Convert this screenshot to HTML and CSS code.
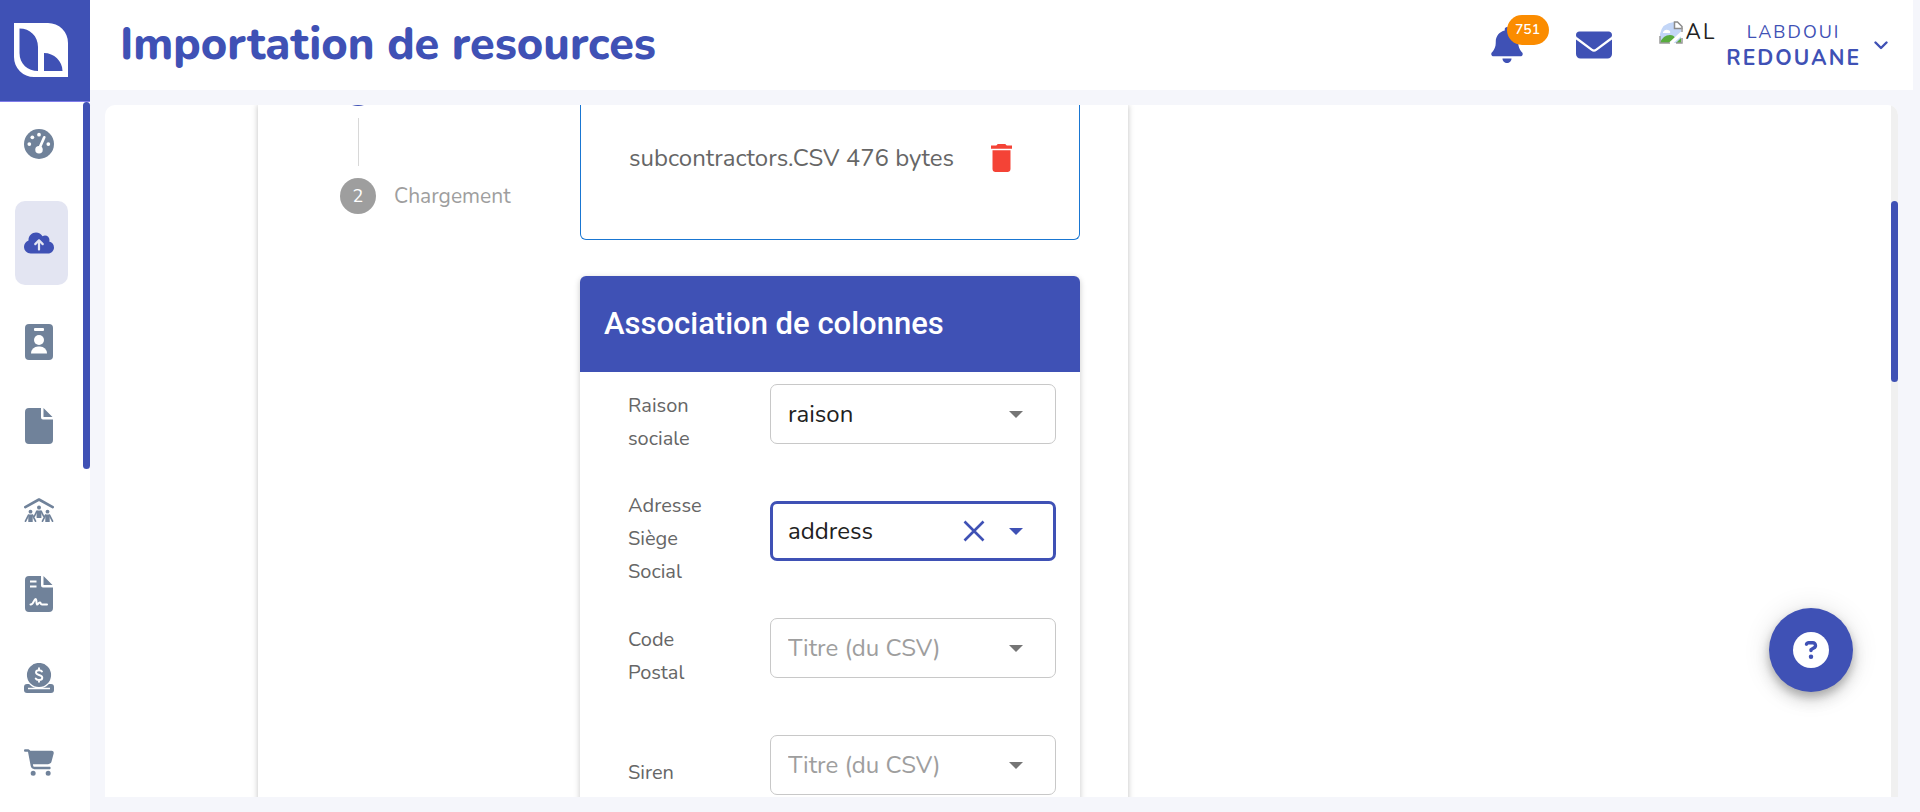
FILE: index.html
```html
<!DOCTYPE html>
<html lang="fr">
<head>
<meta charset="utf-8">
<meta name="viewport" content="width=device-width, initial-scale=1">
<title>Importation de resources</title>
<link rel="stylesheet" href="styles.css">
</head>
<body>
<div class="app">
  <aside class="sidebar">
    <a class="logo" href="#" aria-label="Accueil">
      <svg width="54" height="54" viewBox="0 0 54 54"><path fill="#fff" fill-rule="evenodd" d="M0 0H34A20 20 0 0 1 54 20V54H20A20 20 0 0 1 0 34ZM5.500 5.500V30C5.500 41 14 48 24 48V24C24 13 16 5.500 5.500 5.500ZM30 30V48H48.500C48.500 38 40 30 30 30Z"/></svg>
    </a>
    <div class="side-body">
      <nav class="nav" aria-label="Navigation principale">
        <a class="nav-item" href="#" aria-label="Tableau de bord">
          <svg width="30" height="30" viewBox="0 0 512 512"><circle cx="256" cy="256" r="256" fill="currentColor"/><g fill="#fff"><circle cx="91" cy="256" r="32"/><circle cx="142" cy="142" r="32"/><circle cx="256" cy="96" r="32"/><circle cx="415" cy="256" r="32"/><circle cx="256" cy="352" r="64"/></g><path d="M262 330 346 142" stroke="#fff" stroke-width="46" stroke-linecap="round"/></svg>
        </a>
        <a class="nav-item active" href="#" aria-label="Importation" aria-current="page">
          <svg width="30" height="24" viewBox="0 0 640 512"><path fill="currentColor" d="M144 480C64.500 480 0 415.500 0 336c0-62.800 40.200-116.200 96.200-135.900c-.1-2.700-.2-5.400-.2-8.100c0-88.400 71.600-160 160-160c59.300 0 111 32.200 138.700 80.200C409.900 102 428.300 96 448 96c53 0 96 43 96 96c0 12.200-2.300 23.800-6.400 34.600C596 238.400 640 290.100 640 352c0 70.700-57.300 128-128 128H144zm79-217c-9.400 9.400-9.400 24.600 0 33.900s24.600 9.400 33.900 0l39-39V392c0 13.300 10.700 24 24 24s24-10.700 24-24V257.900l39 39c9.400 9.400 24.600 9.400 33.900 0s9.400-24.600 0-33.900l-80-80c-9.400-9.400-24.600-9.400-33.900 0l-80 80z"/></svg>
        </a>
        <a class="nav-item" href="#" aria-label="Personnel">
          <svg width="28" height="36" viewBox="0 0 28 36"><rect width="28" height="36" rx="4" fill="currentColor"/><g fill="#fff"><rect x="9" y="4" width="10" height="3" rx="1"/><circle cx="14" cy="16" r="5"/><path d="M6 29.500A7 7 0 0 1 13 22.500H15A7 7 0 0 1 22 29.500Z"/></g></svg>
        </a>
        <a class="nav-item" href="#" aria-label="Documents">
          <svg width="28" height="36" viewBox="0 0 28 36"><path fill="currentColor" d="M4 0H16V9.500Q16 11.500 18 11.500H28V32A4 4 0 0 1 24 36H4A4 4 0 0 1 0 32V4A4 4 0 0 1 4 0ZM18.500 0 27.500 9H18.500Z"/></svg>
        </a>
        <a class="nav-item" href="#" aria-label="Logements">
          <svg width="30" height="24" viewBox="0 0 30 24"><path d="M1.300 9.200 15 1.500 28.700 9.200" fill="none" stroke="currentColor" stroke-width="2.600" stroke-linecap="round" stroke-linejoin="round"/><g fill="currentColor"><circle cx="15" cy="9.500" r="2"/><circle cx="6.500" cy="13.700" r="1.900"/><circle cx="23.500" cy="13.700" r="1.900"/><path d="M12.600 12.500H17.400V20H12.600ZM4.300 16.500H8.700V24H4.300ZM21.300 16.500H25.700V24H21.300Z"/></g><path d="M12.800 13.300 10.500 18M17.200 13.300 19.500 18M4.500 17.200 1.500 23.200M8.500 17.200 11.500 23.200M21.500 17.200 18.500 23.200M25.500 17.200 28.500 23.200" stroke="currentColor" stroke-width="1.700" stroke-linecap="round"/></svg>
        </a>
        <a class="nav-item" href="#" aria-label="Contrats">
          <svg width="28" height="36" viewBox="0 0 28 36"><path fill="currentColor" d="M4 0H16V9.500Q16 11.500 18 11.500H28V32A4 4 0 0 1 24 36H4A4 4 0 0 1 0 32V4A4 4 0 0 1 4 0ZM18.500 0 27.500 9H18.500Z"/><path d="M5 5.500H11.500M5 10.500H11.500" stroke="#fff" stroke-width="2"/><path d="M5.500 28.500C8.500 29 9 23 10.500 23S11 28 12 28.500 13.500 26 15 26.500 15 28.500 17 28.500H22" fill="none" stroke="#fff" stroke-width="2" stroke-linecap="round"/></svg>
        </a>
        <a class="nav-item" href="#" aria-label="Paiements">
          <svg width="30" height="30" viewBox="0 0 30 30"><path fill="currentColor" d="M3 21H27A3 3 0 0 1 30 24V27A3 3 0 0 1 27 30H3A3 3 0 0 1 0 27V24A3 3 0 0 1 3 21Z"/><path d="M4 25.500H26" stroke="#fff" stroke-width="1.500"/><circle cx="15" cy="12" r="12.700" fill="currentColor" stroke="#fff" stroke-width="1.200"/><path d="M18 8.500C17.500 7.500 16.500 7.200 15 7.200 13 7.200 12 8.200 12 9.500 12 12.700 18.300 11.300 18.300 14.700 18.300 16 17.200 17 15 17 13.300 17 12.200 16.500 11.700 15.500M15 5.200V7M15 17V18.800" fill="none" stroke="#fff" stroke-width="1.900" stroke-linecap="round"/></svg>
        </a>
        <a class="nav-item" href="#" aria-label="Achats">
          <svg width="30" height="27" viewBox="0 0 576 512"><path fill="currentColor" d="M0 24C0 10.700 10.700 0 24 0H69.500c22 0 41.500 12.800 50.600 32h411c26.300 0 45.500 25 38.600 50.400l-41 152.300c-8.500 31.400-37 53.300-69.500 53.300H170.700l5.400 28.500c2.200 11.300 12.100 19.500 23.600 19.500H488c13.300 0 24 10.700 24 24s-10.700 24-24 24H199.700c-34.600 0-64.300-24.600-70.700-58.500L77.400 54.500c-.7-3.800-4-6.500-7.900-6.500H24C10.700 48 0 37.300 0 24zM128 464a48 48 0 1 1 96 0 48 48 0 1 1 -96 0zm336-48a48 48 0 1 1 0 96 48 48 0 1 1 0-96z"/></svg>
        </a>
      </nav>
      <div class="side-track"><div class="side-thumb"></div></div>
    </div>
  </aside>

  <div class="content">
    <header class="topbar">
      <h1 class="page-title">Importation de resources</h1>
      <div class="tools">
        <button class="bell" type="button" aria-label="Notifications">
          <svg width="32" height="36" viewBox="0 0 448 512"><path fill="currentColor" d="M224 0c-17.700 0-32 14.300-32 32V51.200C119 66 64 130.600 64 208v18.800c0 47-17.300 92.400-48.500 127.600l-7.400 8.300c-8.400 9.400-10.400 22.900-5.300 34.400S19.400 416 32 416H416c12.600 0 24-7.400 29.200-18.900s3.100-25-5.300-34.400l-7.400-8.300C401.300 319.200 384 273.900 384 226.800V208c0-77.400-55-142-128-156.800V32c0-17.700-14.300-32-32-32zm45.300 493.300c12-12 18.700-28.300 18.700-45.300H224 160c0 17 6.700 33.300 18.700 45.300s28.300 18.700 45.300 18.700s33.300-6.700 45.300-18.700z"/></svg>
          <span class="badge">751</span>
        </button>
        <button class="mail" type="button" aria-label="Messages">
          <svg width="36" height="36" viewBox="0 0 512 512"><path fill="currentColor" d="M48 64C21.500 64 0 85.500 0 112c0 15.100 7.100 29.300 19.200 38.400L236.800 313.600c11.400 8.500 27 8.500 38.400 0L492.800 150.400c12.100-9.100 19.200-23.300 19.200-38.400c0-26.500-21.500-48-48-48H48zM0 176V384c0 35.300 28.700 64 64 64H448c35.300 0 64-28.700 64-64V176L294.400 339.200c-22.800 17.100-54 17.100-76.800 0L0 176z"/></svg>
        </button>
        <button class="user" type="button">
          <span class="avatar">
            <svg width="24" height="23" viewBox="0 0 24 23"><path fill="#c3d6f7" d="M1 22V13Q3 2 15 1V6.500H22V22Z"/><path fill="#fff" d="M4 11Q6 8 9 9T11 12H4Z"/><path fill="#58ac3e" d="M1 22Q4 14 11 14 15 14 16 17L11 22Z"/><path fill="#58ac3e" d="M17 22 22 17V22Z"/><path fill="#fff" stroke="#8c8c8c" stroke-width="1.500" d="M15.500 1H18.500L23 5.500V7.500H15.500Z"/><path d="M11 23 24 11" stroke="#fff" stroke-width="3.500"/><path d="M1 15V22H11M17 22H23V17M23 7V11" fill="none" stroke="#999" stroke-width="1.500"/></svg>
            <span>AL</span>
          </span>
          <span class="user-name"><span class="first">LABDOUI</span><strong class="last">REDOUANE</strong></span>
          <svg width="14" height="9" viewBox="0 0 14 9"><path d="M1.500 1.500 7 7 12.500 1.500" fill="none" stroke="currentColor" stroke-width="2.400" stroke-linecap="round" stroke-linejoin="round"/></svg>
        </button>
      </div>
    </header>

    <main class="main">
      <div class="panel">
        <div class="panel-view">
          <section class="card">
            <ol class="stepper">
              <li class="step done"><span class="dot"></span></li>
              <li class="rail"></li>
              <li class="step"><span class="dot">2</span><span>Chargement</span></li>
            </ol>
            <div class="work">
              <div class="dropzone">
                <span>subcontractors.CSV 476 bytes</span>
                <button class="trash" type="button" aria-label="Supprimer le fichier">
                  <svg width="21" height="28" viewBox="5 3 14 18" preserveAspectRatio="none"><path fill="currentColor" d="M6 19c0 1.100.9 2 2 2h8c1.100 0 2-.9 2-2V7H6v12zM19 4h-3.500l-1-1h-5l-1 1H5v2h14V4z"/></svg>
                </button>
              </div>
              <form class="mapping">
                <h2 class="mapping-title">Association de colonnes</h2>
                <div class="row">
                  <label for="raison">Raison sociale</label>
                  <div class="field">
                    <select id="raison"><option>raison</option></select>
                    <svg class="arrow" width="14" height="7" viewBox="0 0 14 7"><path fill="currentColor" d="M0 0H14L7 7Z"/></svg>
                  </div>
                </div>
                <div class="row">
                  <label for="adresse">Adresse Siège Social</label>
                  <div class="field focused">
                    <select id="adresse"><option>address</option></select>
                    <button class="clear" type="button" aria-label="Effacer"><svg width="22" height="22" viewBox="0 0 22 22"><path d="M1.500 1.500 20.500 20.500M20.500 1.500 1.500 20.500" stroke="currentColor" stroke-width="2.600"/></svg></button>
                    <svg class="arrow" width="14" height="7" viewBox="0 0 14 7"><path fill="currentColor" d="M0 0H14L7 7Z"/></svg>
                  </div>
                </div>
                <div class="row">
                  <label for="code">Code Postal</label>
                  <div class="field empty">
                    <select id="code"><option>Titre (du CSV)</option></select>
                    <svg class="arrow" width="14" height="7" viewBox="0 0 14 7"><path fill="currentColor" d="M0 0H14L7 7Z"/></svg>
                  </div>
                </div>
                <div class="row">
                  <label for="siren">Siren</label>
                  <div class="field empty">
                    <select id="siren"><option>Titre (du CSV)</option></select>
                    <svg class="arrow" width="14" height="7" viewBox="0 0 14 7"><path fill="currentColor" d="M0 0H14L7 7Z"/></svg>
                  </div>
                </div>
              </form>
            </div>
          </section>
        </div>
        <div class="panel-track"><div class="panel-thumb"></div></div>
      </div>
    </main>
  </div>

  <button class="help" type="button" aria-label="Aide">
    <svg width="36" height="36" viewBox="0 0 512 512"><circle cx="256" cy="256" r="256" fill="#fff"/><path fill="currentColor" d="M169.800 165.300c7.900-22.300 29.100-37.300 52.800-37.300h58.300c34.900 0 63.100 28.300 63.100 63.100c0 22.600-12.100 43.500-31.700 54.800L280 264.400c-.2 13-10.900 23.600-24 23.600c-13.300 0-24-10.700-24-24V250.500c0-8.600 4.600-16.500 12.100-20.800l44.300-25.400c4.700-2.700 7.600-7.700 7.600-13.100c0-8.400-6.800-15.100-15.100-15.100H222.600c-3.400 0-6.400 2.100-7.500 5.300l-.4 1.200c-4.400 12.500-18.200 19-30.600 14.600s-19-18.200-14.600-30.600l.3-1.300zM224 352a32 32 0 1 1 64 0 32 32 0 1 1 -64 0z"/></svg>
  </button>
</div>
</body>
</html>
```

FILE: styles.css
```css
:root {
  --primary: #3f51b5;
  --page: #f5f6fb;
  --slate: #70829a;
}

* { box-sizing: border-box; }

body {
  margin: 0;
  background: var(--page);
  color: #666;
  font-family: Nunito, "Open Sans", "Noto Sans", sans-serif;
  font-size: 24px;
}

button {
  border: 0;
  padding: 0;
  background: none;
  color: inherit;
  font: inherit;
  cursor: pointer;
}

svg { display: block; flex: none; }

.app { display: flex; height: 100vh; overflow: hidden; }

/* Sidebar */
.sidebar {
  display: flex;
  flex-direction: column;
  flex: none;
  width: 90px;
  background: #fff;
}
.logo {
  flex: none;
  height: 102px;
  padding: 23px 14px;
  background: var(--primary);
  border-bottom: 1px solid #7f7bea;
}
.side-body { display: flex; flex: 1; min-height: 0; }
.nav { flex: 1; padding: 0 15px; overflow: hidden; }
.nav-item {
  display: flex;
  align-items: center;
  justify-content: center;
  height: 84px;
  width: 53px;
  padding-right: 5px;
  border-radius: 10px;
  color: var(--slate);
}
.nav-item.active { margin: 15px 0; background: #e3e5f2; color: var(--primary); }
.side-track { flex: none; width: 7px; }
.side-thumb { height: 367px; border-radius: 4px; background: var(--primary); }

/* Top bar */
.content { display: flex; flex: 1; flex-direction: column; min-width: 0; }
.topbar {
  display: flex;
  align-items: center;
  justify-content: space-between;
  flex: none;
  height: 90px;
  margin-right: 7px;
  padding: 0 25px 0 30px;
  background: #fff;
  color: var(--primary);
}
.page-title { margin: 0; font-size: 45px; font-weight: 800; line-height: 90px; white-space: nowrap; }
.tools { display: flex; align-items: center; }
.bell { position: relative; margin-right: 53px; }
.badge {
  position: absolute;
  left: 16px;
  top: -12px;
  width: 42px;
  border-radius: 15px;
  background: #fb8c00;
  color: #fff;
  font-size: 14px;
  font-weight: 600;
  line-height: 30px;
}
.mail { margin-right: 47px; }
.user { display: flex; align-items: center; letter-spacing: 2px; }
.avatar {
  display: flex;
  align-items: center;
  align-self: flex-start;
  gap: 3px;
  margin-right: 10px;
  color: #222;
  font-size: 21px;
  line-height: 26px;
}
.user-name { display: flex; flex-direction: column; margin-right: 13px; line-height: 26px; }
.first { font-size: 18px; }
.last { font-size: 21px; font-weight: 700; }

/* Scrolling panel */
.main { display: flex; flex: 1; min-height: 0; padding: 15px 22px 15px 15px; }
.panel {
  display: flex;
  flex: 1;
  overflow: hidden;
  border-radius: 10px 10px 0 0;
  background: #fff;
}
.panel-view { flex: 1; overflow: hidden; padding: 0 153px; }
.panel-track { flex: none; width: 7px; padding-top: 96px; background: #f0f0f0; }
.panel-thumb { height: 181px; border-radius: 4px; background: var(--primary); }

.card {
  display: flex;
  width: 870px;
  max-width: 100%;
  min-height: 100%;
  padding: 0 48px 48px 82px;
  box-shadow: 0 0 6px rgba(0, 0, 0, .25);
}

.stepper { width: 240px; margin: -35px 0 0; padding: 0; list-style: none; }
.step { display: flex; align-items: center; gap: 18px; color: #9e9e9e; font-size: 21px; line-height: 36px; }
.dot {
  width: 36px;
  height: 36px;
  border-radius: 50%;
  background: #9e9e9e;
  color: #fff;
  font-size: 18px;
  text-align: center;
}
.done .dot { background: var(--primary); }
.rail { width: 1px; height: 48px; margin: 12px 18px; background: #d8d8d8; }

.work { flex: 1; min-width: 0; }
.dropzone {
  display: flex;
  align-items: center;
  gap: 37px;
  height: 135px;
  margin-bottom: 36px;
  padding: 0 0 28px 48px;
  border: 1px solid #1976d2;
  border-top: 0;
  border-radius: 0 0 6px 6px;
  white-space: nowrap;
}
.trash { color: #f44336; }

.mapping {
  padding-bottom: 24px;
  border-radius: 6px;
  background: #fff;
  box-shadow: 0 2px 6px rgba(0, 0, 0, .22);
}
.mapping-title {
  margin: 0;
  padding: 24px;
  border-radius: 6px 6px 0 0;
  background: var(--primary);
  color: #fff;
  font-family: Roboto, sans-serif;
  font-size: 31px;
  font-weight: 500;
  line-height: 48px;
}
.row {
  display: flex;
  align-items: center;
  min-height: 99px;
  margin-bottom: 18px;
  padding: 0 24px 0 48px;
}
.row label { width: 142px; padding-right: 48px; font-size: 20px; line-height: 33px; }
.field { position: relative; flex: 1; margin-bottom: 15px; color: #757575; }
.field select {
  display: block;
  width: 100%;
  height: 60px;
  padding: 0 17px;
  appearance: none;
  border: 1px solid #c8c8c8;
  border-radius: 7px;
  background: #fff;
  color: #212121;
  font: inherit;
}
.field.empty select { color: #9e9e9e; }
.field.focused { color: var(--primary); }
.field.focused select { padding: 0 15px; border: 3px solid var(--primary); }
.arrow { position: absolute; right: 33px; top: 27px; pointer-events: none; }
.clear { position: absolute; right: 71px; top: 19px; }

.help {
  position: fixed;
  right: 67px;
  bottom: 120px;
  display: grid;
  place-items: center;
  width: 84px;
  height: 84px;
  border-radius: 50%;
  background: var(--primary);
  color: var(--primary);
  box-shadow: 0 5px 8px rgba(0, 0, 0, .2), 0 8px 18px rgba(0, 0, 0, .14), 0 2px 28px rgba(0, 0, 0, .12);
}
```
